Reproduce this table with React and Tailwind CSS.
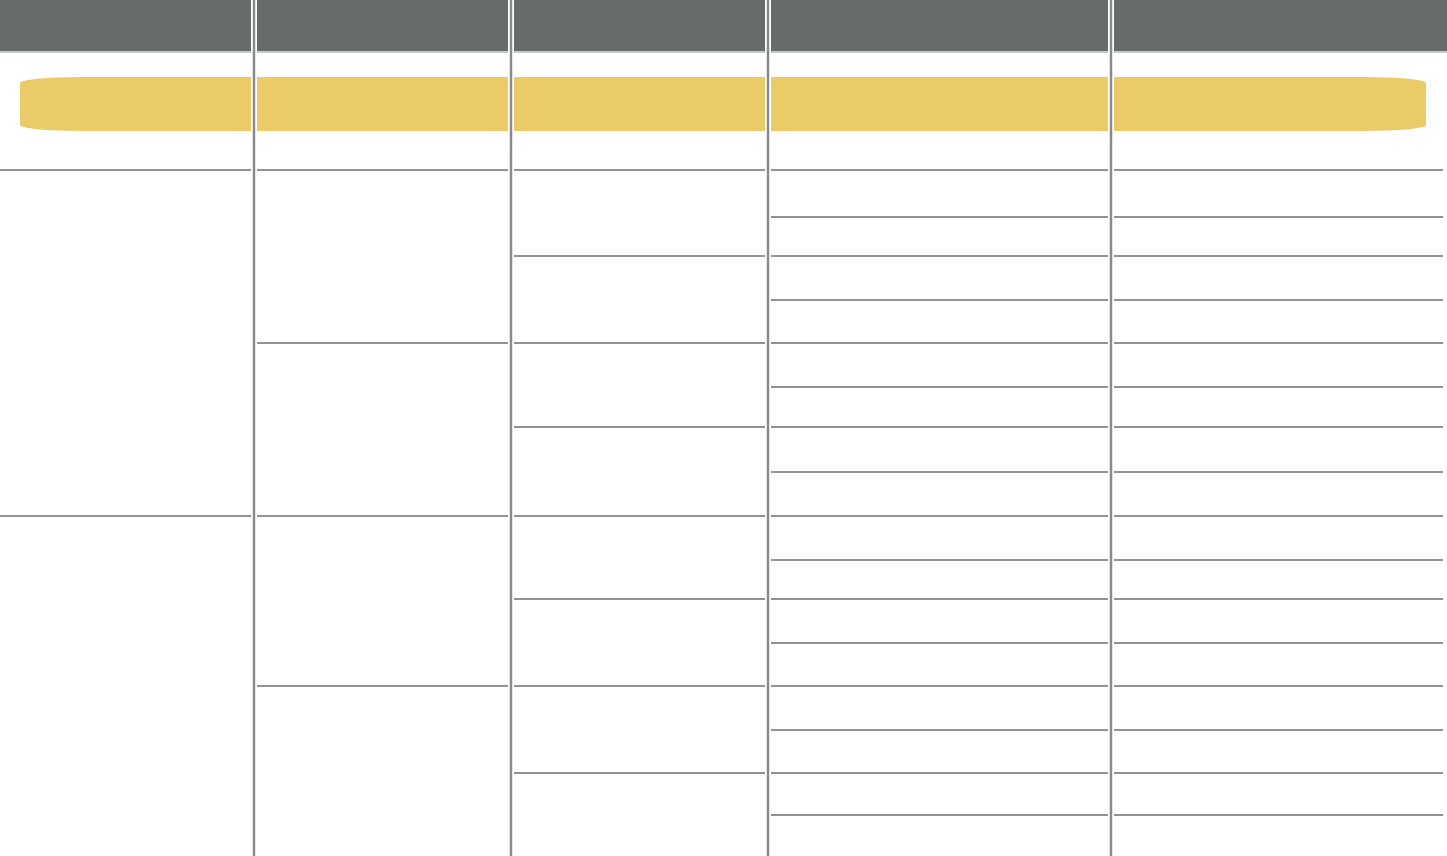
import React from "react";

// leaf row heights for the body (top line included)
const leaves = [47, 39, 44, 43, 44, 40, 45, 44, 44, 39, 44, 43, 44, 43, 42, 41];

const groupRows = (size) => {
  const out = [];
  for (let i = 0; i < leaves.length; i += size) {
    out.push(leaves.slice(i, i + size).reduce((a, b) => a + b, 0));
  }
  return out;
};

const columns = [
  { width: "w-[251px]", rows: groupRows(8), band: "first" },
  { width: "w-[251px]", rows: groupRows(4) },
  { width: "w-[251px]", rows: groupRows(2) },
  { width: "w-[337px]", rows: groupRows(1) },
  { width: "w-[333px]", rows: groupRows(1), band: "last" },
];

const Divider = () => (
  <div className="flex h-full w-[6px] shrink-0 justify-center bg-white">
    <div className="h-full w-[2px] bg-[#8a8a8a] shadow-[1px_0_0_#e4e4e4,-1px_0_0_#e4e4e4]" />
  </div>
);

const Column = ({ width, rows, band }) => {
  let bandClass = "bg-[#ebcb68] h-[54px]";
  if (band === "first") {
    bandClass += " ml-[20px] rounded-tl-[60px_6px] rounded-bl-[60px_6px]";
  }
  if (band === "last") {
    bandClass += " mr-[21px] rounded-tr-[60px_6px] rounded-br-[60px_6px]";
  }
  return (
    <div className={`${width} shrink-0 flex flex-col`}>
      <div className="h-[51px] bg-[#666c69]" />
      <div className="h-[2px] bg-[#cacaca]" />
      <div className="h-[116px] pt-[24px]">
        <div className={bandClass} />
      </div>
      {rows.map((h, i) => (
        <div
          key={i}
          className={`border-t-2 border-[#929292] ${band === "last" ? "mr-[4px]" : ""}`}
          style={{ height: h }}
        />
      ))}
    </div>
  );
};

export default function App() {
  return (
    <div className="h-[856px] w-[1447px] overflow-hidden bg-white flex">
      <Column {...columns[0]} />
      <Divider />
      <Column {...columns[1]} />
      <Divider />
      <Column {...columns[2]} />
      <Divider />
      <Column {...columns[3]} />
      <Divider />
      <Column {...columns[4]} />
    </div>
  );
}
